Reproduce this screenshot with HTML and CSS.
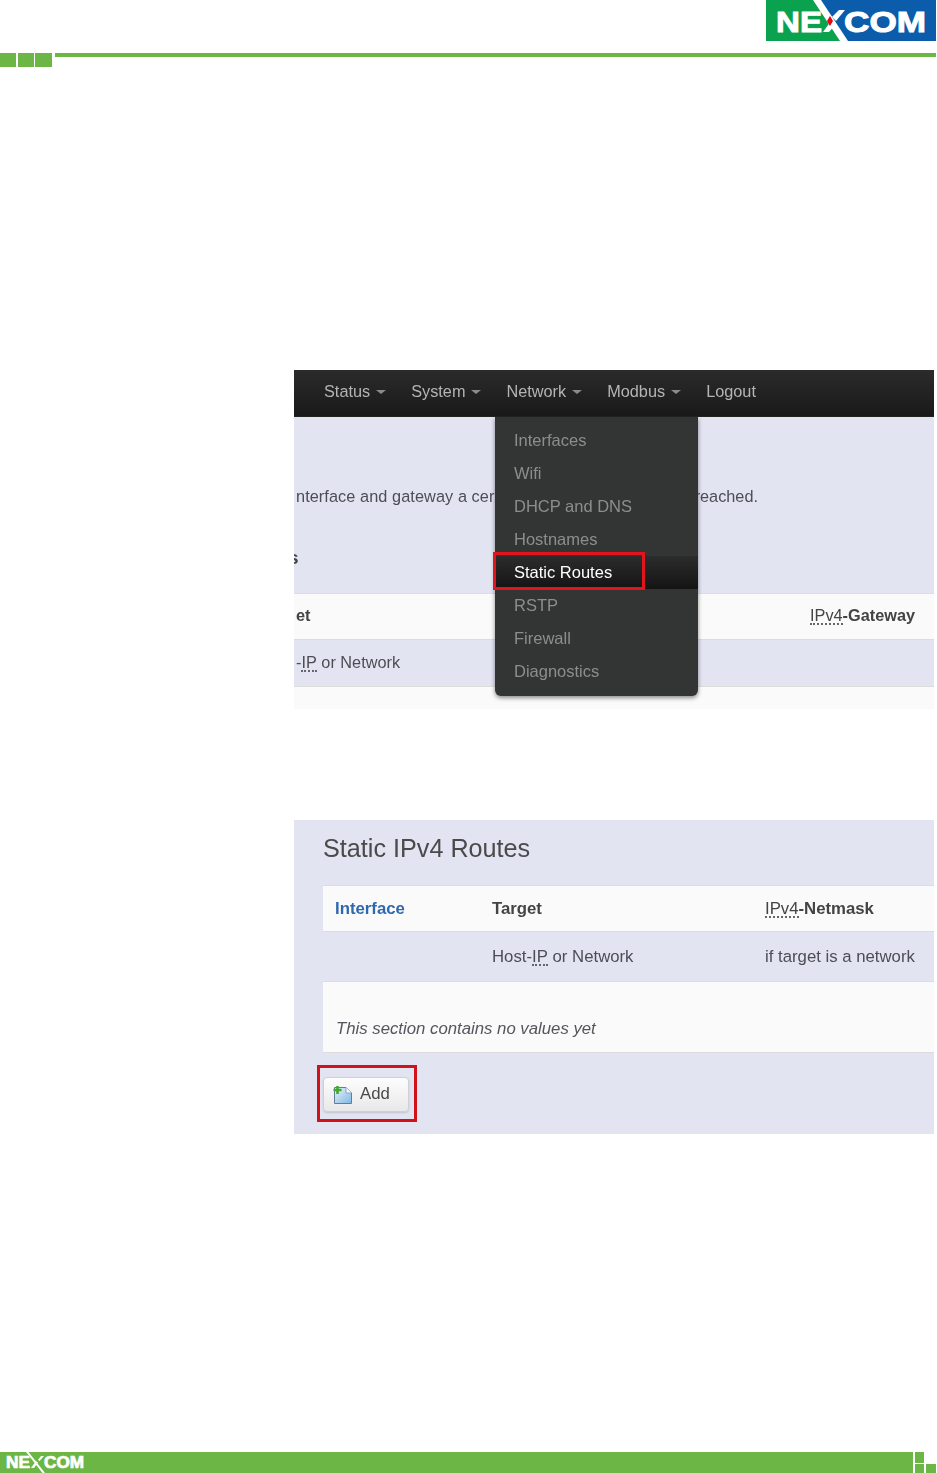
FILE: index.html
```html
<!DOCTYPE html>
<html lang="en">
<head>
<meta charset="utf-8">
<title>Static Routes</title>
<link rel="stylesheet" href="styles.css">
</head>
<body>
<div class="page">
  <header class="top">
    <div class="logo-row">
      <svg class="logo" width="170" height="41" viewBox="0 0 170 41">
        <rect width="170" height="41" fill="#0b5cab"/>
        <polygon points="0,0 48,0 75,41 0,41" fill="#0aa14f"/>
        <polygon points="47,0 55,0 82,41 74,41" fill="#fff"/>
        <polygon points="57,32 65,21 70,24 63,32" fill="#fff"/>
        <polygon points="66,17 73,10 79,10 70,21" fill="#fff"/>
        <polygon points="61,21 64,16 67,21 64,26" fill="#e30613"/>
        <text class="logo-text" x="10" y="32" textLength="46" lengthAdjust="spacingAndGlyphs">NE</text>
        <text class="logo-text" x="78" y="32" textLength="82" lengthAdjust="spacingAndGlyphs">COM</text>
      </svg>
    </div>
    <div class="strip">
      <span class="sq"></span><span class="sq"></span><span class="sq sq-wide"></span>
      <span class="strip-line"></span>
    </div>
  </header>

  <main class="main">
    <section class="shot shot-menu">
      <nav class="nav">
        <span class="nav-item">Status<i class="caret"></i></span>
        <span class="nav-item">System<i class="caret"></i></span>
        <span class="nav-item">Network<i class="caret"></i></span>
        <span class="nav-item">Modbus<i class="caret"></i></span>
        <span class="nav-item">Logout</span>
      </nav>
      <div class="lead-area">
        <p class="lead"><span class="lead-left">nterface and gateway a cer</span><span>reached.</span></p>
        <div class="clip-head">s</div>
      </div>
      <div class="row-white row-a">
        <span class="cell-bold">et</span>
        <span class="cell-bold"><abbr class="dot">IPv4</abbr>-Gateway</span>
      </div>
      <div class="row-plain"><span>-<abbr class="dot">IP</abbr> or Network</span></div>
      <div class="row-tail"></div>

      <ul class="dropdown">
        <li>Interfaces</li>
        <li>Wifi</li>
        <li>DHCP and DNS</li>
        <li>Hostnames</li>
        <li class="active">Static Routes</li>
        <li>RSTP</li>
        <li>Firewall</li>
        <li>Diagnostics</li>
      </ul>
      <div class="mark mark-menu"></div>
    </section>

    <section class="shot shot-table">
      <h2 class="title">Static IPv4 Routes</h2>
      <div class="table">
        <div class="tr th">
          <span class="link">Interface</span>
          <span>Target</span>
          <span><abbr class="dot">IPv4</abbr>-Netmask</span>
        </div>
        <div class="tr td">
          <span></span>
          <span>Host-<abbr class="dot">IP</abbr> or Network</span>
          <span>if target is a network</span>
        </div>
        <div class="empty">This section contains no values yet</div>
      </div>
      <button class="add" type="button">
        <svg width="20" height="20" viewBox="0 0 20 20">
          <defs>
            <linearGradient id="doc" x1="0" y1="0" x2="1" y2="1">
              <stop offset="0" stop-color="#e8f3fb"/>
              <stop offset="1" stop-color="#7fb8e4"/>
            </linearGradient>
          </defs>
          <path d="M1.5 2.500H13L18.500 8V18.500H1.500Z" fill="url(#doc)" stroke="#5f7f99"/>
          <path d="M13 2.500V8H18.500" fill="#f3f8fc" stroke="#7d98ad" stroke-width=".8"/>
          <path d="M4.500 1V9M.5 5H8.500" stroke="#45a82c" stroke-width="2.600"/>
        </svg>
        <span class="add-label">Add</span>
      </button>
      <div class="mark mark-add"></div>
    </section>
  </main>

  <footer class="foot">
    <div class="foot-bar">
      <svg class="foot-logo" width="84" height="21" viewBox="0 0 84 21">
        <polygon points="26,0 28.500,0 45,21 42.500,21" fill="#fff"/>
        <polygon points="31,16 36,9 38,10.500 34,16" fill="#fff"/>
        <polygon points="38,8 41,4 44,4 39.500,9" fill="#fff"/>
        <text class="foot-text" x="6" y="16" textLength="24" lengthAdjust="spacingAndGlyphs">NE</text>
        <text class="foot-text" x="44" y="16" textLength="40" lengthAdjust="spacingAndGlyphs">COM</text>
      </svg>
    </div>
    <div class="foot-squares">
      <span></span><i></i><span></span><span></span>
    </div>
  </footer>
</div>
</body>
</html>
```
FILE: styles.css
```css
* { box-sizing: border-box; }
html, body { margin: 0; padding: 0; background: #fff; }
body { font-family: "Liberation Sans", Arial, sans-serif; }
.page { width: 937px; height: 1473px; display: flex; flex-direction: column; overflow: hidden; }

/* page header */
.top { height: 67px; flex: none; }
.logo-row { height: 53px; display: flex; justify-content: flex-end; padding-right: 1px; }
.logo { display: block; }
.logo-text { font: bold 30px "Liberation Sans", Arial, sans-serif; fill: #fff; stroke: #fff; stroke-width: 1; }
.strip { display: flex; gap: 2px; align-items: flex-start; padding-right: 1px; }
.sq { width: 16px; height: 14px; background: #6cb645; }
.sq-wide { width: 17px; margin-left: -1px; }
.strip-line { flex: 1; height: 4px; margin-left: 1px; background: #6cb645; }

/* document body */
.main { flex: 1; padding: 303px 3px 0 294px; }
.shot { position: relative; width: 640px; overflow: hidden; background: #e3e4f2; color: #4a4a4a; font-size: 16.3px; filter: blur(.35px); }
.shot-menu { height: 339px; margin-bottom: 111px; display: flex; flex-direction: column; }
.shot-table { height: 314px; padding: 14px 0 0 29px; font-size: 16.75px; }

.nav { height: 47px; flex: none; display: flex; align-items: center; padding: 0 0 3px 30px; gap: 25px; background: linear-gradient(#2b2b2b, #191919); color: #b4b4b4; border-bottom: 1px solid #222; }
.nav-item { display: flex; align-items: center; }
.caret { width: 0; height: 0; margin-left: 6px; border-left: 5px solid transparent; border-right: 5px solid transparent; border-top: 4px solid #8b8b8b; }

.lead-area { height: 176px; flex: none; padding: 70px 0 0 2px; }
.lead { display: flex; justify-content: space-between; margin: 0; padding-right: 176px; white-space: nowrap; line-height: 19px; color: #4d4d55; }
.lead-left { letter-spacing: .08px; }
.clip-head { margin: 41px 0 0 -8px; font-size: 19px; font-weight: bold; line-height: 22px; color: #444; }

.row-white { background: #fafafa; border-top: 1px solid #ddd; border-bottom: 1px solid #dcdcdc; }
.row-a { height: 47px; flex: none; display: flex; justify-content: space-between; align-items: center; padding: 0 19px 2px 2px; }
.cell-bold { font-weight: bold; color: #444; }
.row-plain { height: 47px; flex: none; display: flex; align-items: center; padding: 0 0 2px 2px; border-bottom: 1px solid #dcdcdc; color: #4d4d55; }
.row-tail { flex: 1; background: #fafafa; }

.dot { text-decoration: none; font-weight: normal; border-bottom: 2px dotted #666; line-height: 15px; display: inline-block; }

.dropdown { position: absolute; left: 201px; top: 47px; width: 203px; height: 279px; margin: 0; padding: 7px 0 0; list-style: none; font-size: 16.5px; background: #333434; border-radius: 0 0 6px 6px; box-shadow: 0 2px 4px rgba(0, 0, 0, .45); color: #8d8d8d; }
.dropdown li { height: 33px; line-height: 33px; padding-left: 19px; }
.dropdown .active { color: #fff; background: linear-gradient(#2c2c2c, #141414); }

.mark { position: absolute; border-style: solid; }
.mark-menu { left: 199px; top: 182px; width: 152px; height: 38px; border-width: 3px; border-color: #e2141c; }
.mark-add { left: 23px; top: 245px; width: 100px; height: 57px; border-width: 3px; border-color: #d0121b; }

.title { margin: 0; height: 51px; font-size: 25.2px; font-weight: normal; line-height: 28px; color: #4a4a4a; }
.table { display: flex; flex-direction: column; }
.tr { display: grid; grid-template-columns: 157px 273px 1fr; align-items: center; padding-left: 12px; white-space: nowrap; }
.th { height: 47px; background: #fafafa; border-top: 1px solid #ddd; border-bottom: 1px solid #dcdcdc; font-weight: bold; color: #444; }
.td { height: 49px; color: #4d4d55; }
.link { color: #2f68ae; }
.empty { height: 72px; padding: 37px 0 0 13px; background: #fafafa; border-top: 1px solid #ddd; border-bottom: 1px solid #dcdcdc; font-style: italic; line-height: 20px; color: #55555d; }

.add { display: flex; align-items: center; gap: 7px; width: 86px; height: 35px; margin-top: 24px; padding: 0 0 0 9px; font: inherit; color: #4a4a4a; background: linear-gradient(#fdfdfd, #e8e8e8); border: 1px solid #cfcfd4; border-radius: 4px; box-shadow: 0 1px 2px rgba(0, 0, 0, .15); }
.add svg { flex: none; }
.add-label { margin-bottom: 2px; }

/* page footer */
.foot { height: 21px; flex: none; display: flex; gap: 2px; }
.foot-bar { width: 913px; flex: none; background: #6cb645; }
.foot-logo { display: block; }
.foot-text { font: bold 16px "Liberation Sans", Arial, sans-serif; fill: #fff; stroke: #fff; stroke-width: .7; }
.foot-squares { width: 21px; flex: none; display: grid; grid-template-columns: 9px 10px; grid-template-rows: 11px 10px; gap: 0 2px; }
.foot-squares span { background: #6cb645; }
.foot-squares span:nth-of-type(2), .foot-squares span:nth-of-type(3) { margin-top: 1px; }
```
